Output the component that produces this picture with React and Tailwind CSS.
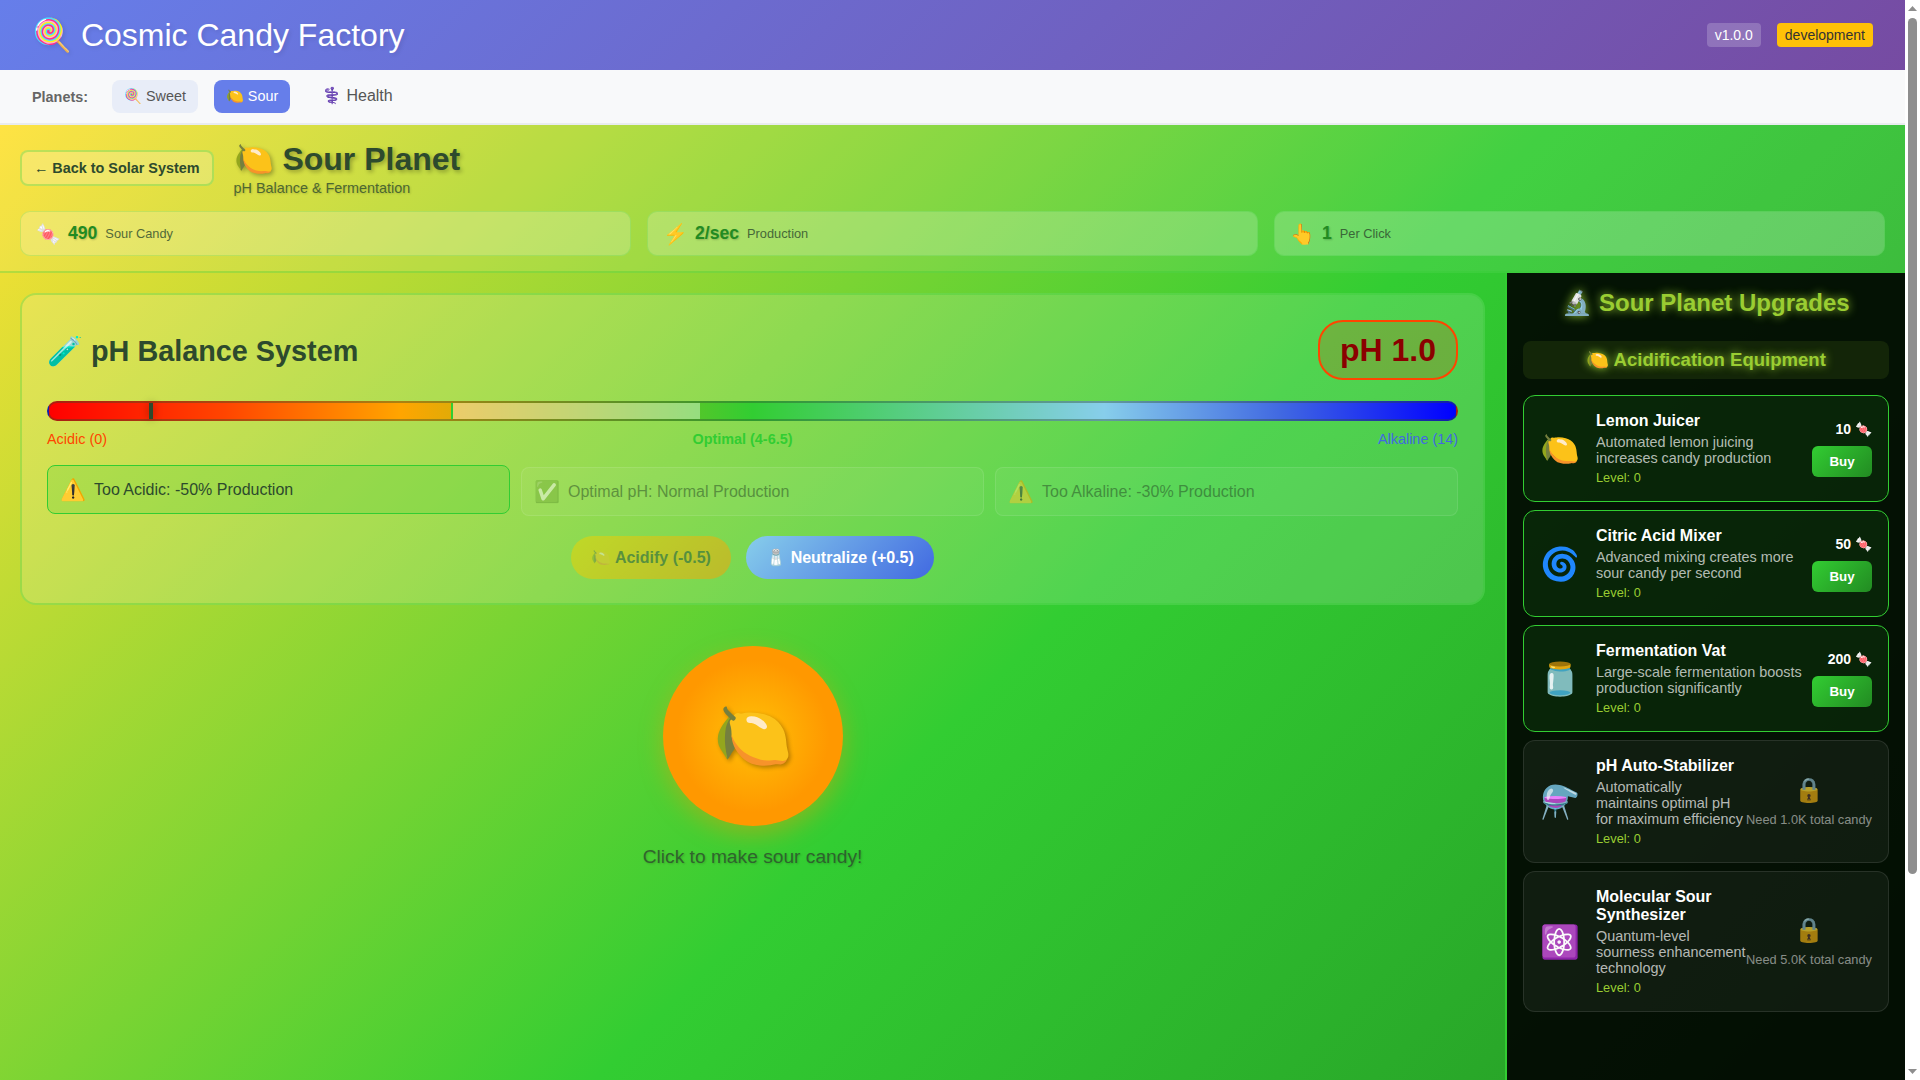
const upgrades = [
  { icon: '🍋', name: 'Lemon Juicer', desc: 'Automated lemon juicing increases candy production', cost: 10 },
  { icon: '🌀', name: 'Citric Acid Mixer', desc: 'Advanced mixing creates more sour candy per second', cost: 50 },
  { icon: '🫙', name: 'Fermentation Vat', desc: 'Large-scale fermentation boosts production significantly', cost: 200 },
  { icon: '⚗️', name: 'pH Auto-Stabilizer', desc: 'Automatically maintains optimal pH for maximum efficiency', need: '1.0K' },
  { icon: '⚛️', name: 'Molecular Sour Synthesizer', desc: 'Quantum-level sourness enhancement technology', need: '5.0K' },
];

function Upgrade({ u }) {
  const locked = !!u.need;
  return (
    <div className={`flex items-center rounded-[12px] border p-4 ${locked ? 'border-white/10 bg-white/5' : 'border-[#32cd32] bg-[#32cd32]/10'}`}>
      <div className="mr-4 w-10 shrink-0 text-center text-[32px]">{u.icon}</div>
      <div className="min-w-0 flex-1">
        <h4 className="mb-1 text-[16px] font-bold text-white">{u.name}</h4>
        <p className="mb-1 text-[14.4px] text-white/70">{u.desc}</p>
        <div className="text-[12.8px] text-[#9acd32]">Level: 0</div>
      </div>
      {locked ? (
        <div className="flex shrink-0 flex-col items-center gap-2">
          <span className="text-[24px] opacity-70">🔒</span>
          <span className="text-[12.8px] whitespace-nowrap text-white/50">Need {u.need} total candy</span>
        </div>
      ) : (
        <div className="flex shrink-0 flex-col items-end gap-[9px]">
          <span className="text-[14px] font-bold text-white">{u.cost} 🍬</span>
          <button className="h-[31px] w-[60px] rounded-[6px] bg-[linear-gradient(135deg,#32cd32,#228b22)] text-[13.33px] font-bold text-white">Buy</button>
        </div>
      )}
    </div>
  );
}

function Stat({ icon, value, label }) {
  return (
    <div className="flex h-[45px] items-center rounded-[10px] border border-[#32cd32]/20 bg-white/20 px-[15px]">
      <span className="mr-[7px] text-[20px]">{icon}</span>
      <span className="mr-[8px] text-[17.6px] font-bold text-[#228b22] [text-shadow:1px_1px_2px_rgba(0,0,0,0.2)]">{value}</span>
      <span className="text-[12.8px] text-[#2d4a2d] opacity-80">{label}</span>
    </div>
  );
}

function Effect({ icon, text, active }) {
  return (
    <div className={`flex h-[49px] items-center gap-2 rounded-[8px] border px-3 text-[16px] text-[#2d4a2d] ${active ? '-translate-y-0.5 border-[#32cd32] bg-[#32cd32]/20' : 'border-white/20 bg-white/10 opacity-50'}`}>
      <span className="text-[21px]">{icon}</span>
      <span>{text}</span>
    </div>
  );
}

function Scrollbar() {
  return (
    <div className="flex h-screen w-[15px] shrink-0 flex-col bg-white px-[3px] py-[6px]">
      <svg width="9" height="5" viewBox="0 0 9 5" className="shrink-0"><path d="M4.5 0L9 5H0z" fill="#8e8e8e" /></svg>
      <div className="mt-[7px] h-[856px] shrink-0 rounded-full bg-[#8e8e8e]" />
      <svg width="9" height="5" viewBox="0 0 9 5" className="mt-auto shrink-0"><path d="M0 0H9L4.5 5z" fill="#8e8e8e" /></svg>
    </div>
  );
}

export default function App() {
  return (
    <div className="flex h-screen font-['Liberation_Sans',Arial,sans-serif] leading-[normal]">
      <div className="min-w-0 flex-1 overflow-y-auto">
        <header className="flex h-[70px] items-center justify-between bg-[linear-gradient(135deg,#667eea,#764ba2)] px-8 text-white">
          <h1 className="text-[32px] font-normal [text-shadow:2px_2px_4px_rgba(0,0,0,0.1)]">🍭 Cosmic Candy Factory</h1>
          <div className="flex items-center gap-4 text-[14px]">
            <span className="rounded-[4px] bg-white/20 px-2 py-1">v1.0.0</span>
            <span className="rounded-[4px] bg-[#ffc107] px-2 py-1 text-[#333]">development</span>
          </div>
        </header>

        <nav className="flex h-[55px] items-center gap-4 border-b-2 border-[#e9ecef] bg-[#f8f9fa] px-8 text-[14.4px]">
          <span className="mr-2 font-bold text-[#666]">Planets:</span>
          <button className="h-[33px] w-[86px] rounded-[8px] bg-[#e8edf8] text-[#555]">🍭 Sweet</button>
          <button className="h-[33px] w-[76px] rounded-[8px] bg-[#667eea] text-white">🍋 Sour</button>
          <span className="ml-[16px] -translate-y-px text-[16px] text-[#555]">⚕️ Health</span>
        </nav>

        <div className="bg-[linear-gradient(135deg,#ffe135_0%,#32cd32_50%,#228b22_100%)]">
          <section className="border-b-2 border-[#32cd32]/30 bg-white/[0.08] px-5 pt-[15px] pb-[15px] text-[#2d4a2d]">
            <div className="mb-[15px] flex items-center gap-5">
              <button className="h-9 w-[193.5px] rounded-[8px] border-2 border-[#32cd32]/30 bg-white/20 text-[14.4px] font-bold">← Back to Solar System</button>
              <div>
                <h1 className="text-[32px] font-bold [text-shadow:2px_2px_4px_rgba(0,0,0,0.3)]">🍋 Sour Planet</h1>
                <p className="mt-[2px] text-[14.4px] opacity-80 [text-shadow:1px_1px_2px_rgba(0,0,0,0.2)]">pH Balance &amp; Fermentation</p>
              </div>
            </div>
            <div className="grid grid-cols-3 gap-4">
              <Stat icon="🍬" value="490" label="Sour Candy" />
              <Stat icon="⚡" value="2/sec" label="Production" />
              <Stat icon="👆" value="1" label="Per Click" />
            </div>
          </section>

          <div className="flex h-[1047px]">
            <main className="min-w-0 flex-1 p-5">
              <section className="rounded-[16px] border-2 border-[#32cd32]/30 bg-white/15 px-[25px] pt-[25px] pb-[24px] text-[#2d4a2d]">
                <div className="mb-[21px] flex items-center justify-between">
                  <h2 className="pt-[2px] text-[28.8px] font-bold">🧪 pH Balance System</h2>
                  <div className="rounded-[25px] border-2 border-[#ff4500] bg-[#dc3200]/20 px-5 py-[9.5px] text-[32px] font-bold text-[#8b0000]">pH 1.0</div>
                </div>
                <div className="relative h-5 rounded-[10px] border-2 border-[#2d4a2d]/40 bg-[linear-gradient(to_right,#ff0000_0%,#ff4500_12.5%,#ffa500_25%,#32cd32_50%,#87ceeb_75%,#4169e1_87.5%,#0000ff_100%)]">
                  <div className="absolute inset-y-0 left-[28.57%] w-[17.7%] border-l-2 border-[#32cd32] bg-white/40" />
                  <div className="absolute inset-y-0 left-[7.14%] w-1 bg-[#2d4a2d] shadow-[0_0_8px_rgba(0,0,0,0.4)]" />
                </div>
                <div className="mt-2.5 mb-[20px] flex justify-between text-[14.4px]">
                  <span className="text-[#ff4500]">Acidic (0)</span>
                  <span className="font-bold text-[#32cd32]">Optimal (4-6.5)</span>
                  <span className="text-[#4169e1]">Alkaline (14)</span>
                </div>
                <div className="mb-5 grid grid-cols-3 gap-[11px]">
                  <Effect icon="⚠️" text="Too Acidic: -50% Production" active />
                  <Effect icon="✅" text="Optimal pH: Normal Production" />
                  <Effect icon="⚠️" text="Too Alkaline: -30% Production" />
                </div>
                <div className="flex justify-center gap-[15px]">
                  <button className="h-[43px] w-[160px] rounded-full bg-[linear-gradient(135deg,#f0d800,#fca008)] text-[16px] font-bold text-[#2d4a2d] opacity-50">🍋 Acidify (-0.5)</button>
                  <button className="h-[43px] w-[188px] rounded-full bg-[linear-gradient(135deg,#87ceeb,#4169e1)] text-[16px] font-bold text-white">🧂 Neutralize (+0.5)</button>
                </div>
              </section>

              <div className="mt-[41px] flex flex-col items-center">
                <button className="flex size-[180px] items-center justify-center rounded-full bg-[radial-gradient(circle,#ffc107_0%,#ff9800_60%)] text-[64px] shadow-[0_8px_25px_rgba(255,152,0,0.4)] [text-shadow:2px_2px_4px_rgba(0,0,0,0.3)]">🍋</button>
                <p className="mt-5 text-[19.2px] text-[#2d4a2d] opacity-80 [text-shadow:1px_1px_2px_rgba(0,0,0,0.2)]">Click to make sour candy!</p>
              </div>
            </main>

            <aside className="w-[400px] shrink-0 border-l-2 border-[#32cd32] bg-black/90 px-4 pt-4">
              <h2 className="mb-6 text-center text-[24px] font-bold text-[#9acd32] [text-shadow:0_0_10px_#9acd32]">🔬 Sour Planet Upgrades</h2>
              <h3 className="mb-4 rounded-[8px] bg-[#9acd32]/10 py-2 text-center text-[18.56px] font-bold text-[#9acd32] [text-shadow:0_0_8px_#9acd32]">🍋 Acidification Equipment</h3>
              <div className="flex flex-col gap-2">
                {upgrades.map((u) => <Upgrade key={u.name} u={u} />)}
              </div>
            </aside>
          </div>
        </div>
      </div>
      <Scrollbar />
    </div>
  );
}
